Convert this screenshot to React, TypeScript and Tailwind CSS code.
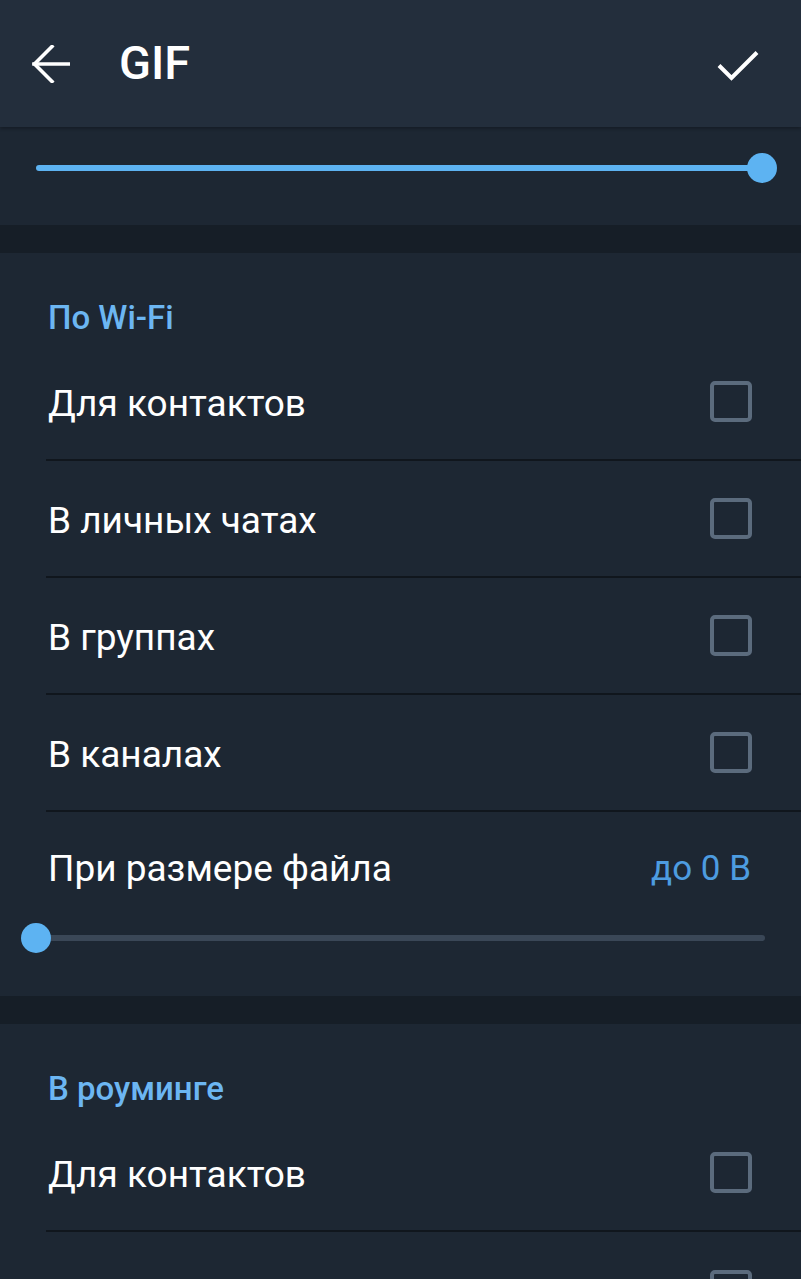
import React from "react";

const Checkbox = () => (
  <div className="w-[42px] h-[41px] rounded-[5px] border-[4px] border-[#5b6b7d] shrink-0" />
);

const Row = ({ label, last }: { label?: string; last?: boolean }) => (
  <div className={`ml-[46px] flex h-[117px] items-center justify-between pl-[2px] pr-[49px] ${last ? "" : "border-b-2 border-[#10161d]"}`}>
    <span className="pt-[4px] text-[37px] text-white leading-normal">{label}</span>
    <Checkbox />
  </div>
);

const SectionHeader = ({ title }: { title: string }) => (
  <div className="h-[91px] pl-[48px] pt-[46px]">
    <div className="text-[33px] font-medium leading-[38px] text-[#6cb6f2]">{title}</div>
  </div>
);

export default function App() {
  return (
    <div
      className="w-[801px] h-[1279px] overflow-hidden bg-[#1d2733] flex flex-col"
      style={{ fontFamily: "Roboto, 'Noto Sans', sans-serif" }}
    >
      {/* Header */}
      <div className="h-[127px] shrink-0 bg-[#232e3c] flex items-center pl-[32px] pr-[40px] shadow-[0_2px_3px_rgba(0,0,0,0.25)] relative z-10">
        <svg width="38" height="38" viewBox="0 0 38 38" className="shrink-0">
          <path d="M2 19H37" stroke="white" strokeWidth="3.6" strokeLinecap="square" fill="none" />
          <path d="M20 1.5L2.5 19L20 36.5" stroke="white" strokeWidth="3.6" fill="none" strokeLinecap="square" />
        </svg>
        <div className="ml-[49px] text-[47px] font-medium text-white leading-none pb-[2px]">GIF</div>
        <div className="flex-1" />
        <svg width="46" height="36" viewBox="0 0 46 36" className="shrink-0 mt-[2px]">
          <path d="M4 18.5L16.5 31L42 5.5" stroke="white" strokeWidth="4" fill="none" strokeLinecap="butt" />
        </svg>
      </div>

      {/* Top slider */}
      <div className="h-[98px] shrink-0 flex items-center pl-[36px] pr-[39px] pb-[16px]">
        <div className="relative h-[6px] flex-1 rounded-full bg-[#5db3f2]">
          <div className="absolute right-[-15px] top-1/2 -translate-y-1/2 w-[30px] h-[30px] rounded-full bg-[#5db3f2]" />
        </div>
      </div>

      <div className="h-[28px] shrink-0 bg-[#161e27]" />

      {/* Wi-Fi section */}
      <div className="shrink-0">
        <SectionHeader title="По Wi-Fi" />
        <Row label="Для контактов" />
        <Row label="В личных чатах" />
        <Row label="В группах" />
        <Row label="В каналах" />
        <div className="h-[108px] flex items-center justify-between pl-[48px] pr-[50px] pt-[6px]">
          <span className="text-[37px] text-white">При размере файла</span>
          <span className="text-[35px] text-[#4d9ce0]">до 0 B</span>
        </div>
        <div className="h-[36px] flex items-center pl-[36px] pr-[36px]">
          <div className="relative h-[6px] flex-1 rounded-full bg-[#3a4757]">
            <div className="absolute left-[-15px] top-1/2 -translate-y-1/2 w-[30px] h-[30px] rounded-full bg-[#5db3f2]" />
          </div>
        </div>
        <div className="h-[40px]" />
      </div>

      <div className="h-[28px] shrink-0 bg-[#161e27]" />

      {/* Roaming section */}
      <div className="shrink-0">
        <SectionHeader title="В роуминге" />
        <Row label="Для контактов" />
        <Row last />
      </div>
    </div>
  );
}
